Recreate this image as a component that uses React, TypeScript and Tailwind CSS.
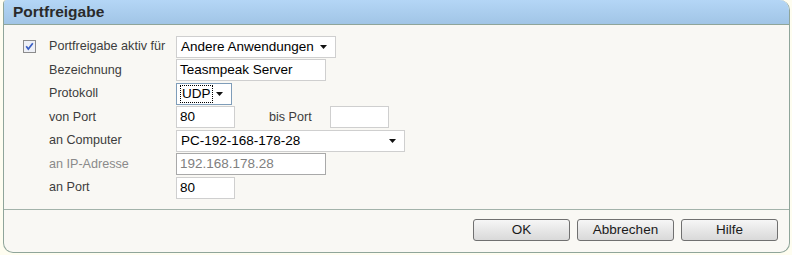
import React from 'react';

const font = { fontFamily: '"Liberation Sans", Arial, sans-serif' };

function Arrow() {
  return (
    <svg width="7" height="4" viewBox="0 0 7 4" className="shrink-0">
      <path d="M0 0h7L3.5 4z" fill="#111" />
    </svg>
  );
}

function Select({ value, width, focus }: { value: string; width: string; focus?: boolean }) {
  return (
    <div
      className={`flex h-[22px] items-center justify-between bg-white pl-[3px] pr-[8px] text-[13.5px] text-black ${width} border ${
        focus ? 'border-[#7f9db9]' : 'border-[#cfcfcf]'
      }`}
    >
      {focus ? (
        <span className="border border-dotted border-black px-[1px] leading-[16px]">{value}</span>
      ) : (
        <span className="pl-[1px]">{value}</span>
      )}
      <Arrow />
    </div>
  );
}

function Input({ value, width, disabled }: { value?: string; width: string; disabled?: boolean }) {
  return (
    <div
      className={`flex h-[22px] items-center border bg-white px-[3px] text-[13.5px] ${width} ${
        disabled ? 'border-[#a9a9a9] text-[#808080]' : 'border-[#cfcfcf] text-black'
      }`}
    >
      {value}
    </div>
  );
}

function Row({ label, children, gray }: { label: string; children: React.ReactNode; gray?: boolean }) {
  return (
    <div className="flex h-[23.5px] items-center pl-[45px]">
      <div className={`w-[127px] text-[12.6px] ${gray ? 'text-[#8a8a8a]' : 'text-[#3d3d3d]'}`}>{label}</div>
      {children}
    </div>
  );
}

function Button({ label }: { label: string }) {
  return (
    <button className="h-[22px] w-[97px] rounded-[3px] border border-[#707070] bg-gradient-to-b from-[#f6f6f6] to-[#d9d9d9] text-[13.5px] text-[#1a1a1a]">
      {label}
    </button>
  );
}

export default function App() {
  return (
    <div className="h-[255px] w-[792px] bg-[#fefdf0] pl-[3px] pr-[2px]" style={font}>
      <div className="flex h-[253px] flex-col overflow-hidden rounded-tl-[4px] rounded-tr-[10px] rounded-b-[10px] border border-t-0 border-[#8fa59a] bg-[#f9f8f4]">
        <div className="flex h-[25px] shrink-0 items-center border-b border-[#8fa59a] bg-gradient-to-b from-[#b4d6f6] to-[#a1c5e6] pl-[9px] text-[15.5px] font-bold text-[#2a2a2a]">
          Portfreigabe
        </div>
        <div className="flex flex-col pt-[10px] pb-[9px]">
          <div className="flex h-[23.5px] items-center pl-[19px]">
            <svg width="13" height="13" viewBox="0 0 13 13" className="mr-[13px] shrink-0">
              <rect x="0.5" y="0.5" width="12" height="12" fill="#eef0f6" stroke="#8c8c8c" />
              <path d="M3.2 6.3 L5.3 9 L9.8 3.3" fill="none" stroke="#3a5fc4" strokeWidth="1.7" />
            </svg>
            <div className="w-[127px] text-[12.6px] text-[#3d3d3d]">Portfreigabe aktiv für</div>
            <Select value="Andere Anwendungen" width="w-[160px]" />
          </div>
          <Row label="Bezeichnung">
            <Input value="Teasmpeak Server" width="w-[150px]" />
          </Row>
          <Row label="Protokoll">
            <Select value="UDP" width="w-[56px]" focus />
          </Row>
          <Row label="von Port">
            <Input value="80" width="w-[59px]" />
            <div className="w-[95px] pl-[34px] text-[12.6px] text-[#3d3d3d]">bis Port</div>
            <Input width="w-[59px]" />
          </Row>
          <Row label="an Computer">
            <Select value="PC-192-168-178-28" width="w-[229px]" />
          </Row>
          <Row label="an IP-Adresse" gray>
            <Input value="192.168.178.28" width="w-[150px]" disabled />
          </Row>
          <Row label="an Port">
            <Input value="80" width="w-[59px]" />
          </Row>
        </div>
        <div className="flex flex-1 justify-end gap-[7px] border-t border-[#a3b3aa] pt-[9px] pr-[11px]">
          <Button label="OK" />
          <Button label="Abbrechen" />
          <Button label="Hilfe" />
        </div>
      </div>
    </div>
  );
}
